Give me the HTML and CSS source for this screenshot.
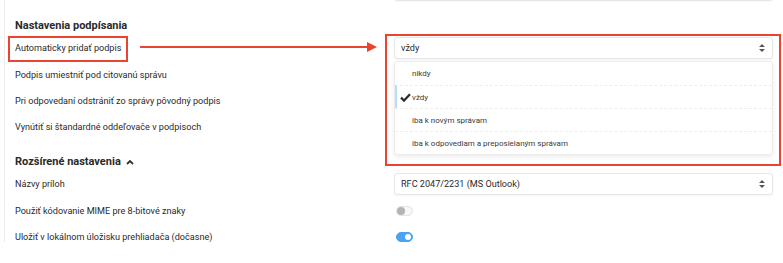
FILE: index.html
```html
<!DOCTYPE html>
<html lang="sk">
<head>
    <meta charset="UTF-8">
    <meta name="viewport" content="width=device-width, initial-scale=1.0">
    <title>Nastavenia podpísania</title>
    <link rel="stylesheet" href="styles.css">
</head>
<body>
    <div class="panel">
        <!-- row from the previous section, scrolled mostly out of view -->
        <div class="row row-prev">
            <div class="label"></div>
            <div class="control"><div class="select"></div></div>
        </div>

        <h3 class="section-title">Nastavenia podpísania</h3>

        <div class="row row-select" id="autoSignature">
            <div class="label">Automaticky pridať podpis</div>
            <div class="control">
                <div class="select">
                    <span>vždy</span>
                    <svg class="sort-icon" width="6" height="8" viewBox="0 0 6 8"><path d="M3 0L6 3H0z M3 8L0 5H6z" fill="#555"/></svg>
                </div>
                <ul class="dropdown">
                    <li>nikdy</li>
                    <li class="selected">
                        <svg class="check" width="11" height="9" viewBox="0 0 11 9"><path d="M1 4.6L4 7.6L10 1.2" fill="none" stroke="#2b2b2b" stroke-width="2.2"/></svg>
                        vždy
                    </li>
                    <li>iba k novým správam</li>
                    <li>iba k odpovediam a preposielaným správam</li>
                </ul>
            </div>
        </div>

        <div class="row row-toggle">
            <div class="label">Podpis umiestniť pod citovanú správu</div>
            <div class="control"></div>
        </div>
        <div class="row row-toggle">
            <div class="label">Pri odpovedaní odstrániť zo správy pôvodný podpis</div>
            <div class="control"></div>
        </div>
        <div class="row row-toggle">
            <div class="label">Vynútiť si štandardné oddeľovače v podpisoch</div>
            <div class="control"></div>
        </div>

        <h3 class="section-title advanced">
            Rozšírené nastavenia
            <svg width="8" height="6" viewBox="0 0 8 6"><path d="M1 5L4 2L7 5" fill="none" stroke="#333" stroke-width="1.8"/></svg>
        </h3>

        <div class="row row-select">
            <div class="label">Názvy príloh</div>
            <div class="control">
                <div class="select">
                    <span>RFC 2047/2231 (MS Outlook)</span>
                    <svg class="sort-icon" width="6" height="8" viewBox="0 0 6 8"><path d="M3 0L6 3H0z M3 8L0 5H6z" fill="#555"/></svg>
                </div>
            </div>
        </div>
        <div class="row row-toggle">
            <div class="label">Použiť kódovanie MIME pre 8-bitové znaky</div>
            <div class="control"><span class="toggle"></span></div>
        </div>
        <div class="row row-toggle">
            <div class="label">Uložiť v lokálnom úložisku prehliadača (dočasne)</div>
            <div class="control"><span class="toggle on"></span></div>
        </div>
    </div>

    <!-- annotation overlay -->
    <div class="mark mark-label"></div>
    <div class="mark-arrow"></div>
    <div class="mark mark-control"></div>
</body>
</html>
```

FILE: styles.css
```css
* {
    margin: 0;
    padding: 0;
    box-sizing: border-box;
}

body {
    font-family: Roboto, 'Liberation Sans', Arial, sans-serif;
    background: white;
    color: #2a2a2a;
    width: 783px;
    height: 263px;
    overflow: hidden;
    position: relative;
}

.panel {
    margin-left: 4px;
    border-left: 1px solid #ececec;
    padding: 0 10px;
    height: 263px;
}

.row {
    display: grid;
    grid-template-columns: 1fr 379px;
    align-items: center;
}

.row-prev {
    height: 22px;
    margin-top: -21px;
}

.row-select {
    height: 28px;
    position: relative;
}

.row-toggle {
    height: 26px;
}

.label {
    font-size: 9.1px;
    color: #2a2a2a;
}

.control {
    position: relative;
    height: 100%;
    display: flex;
    align-items: center;
}

.section-title {
    font-size: 11px;
    font-weight: bold;
    color: #2a2a2a;
    line-height: 16px;
    margin: 17px 0 0;
}

.section-title.advanced {
    margin: 14px 0 0;
    display: flex;
    align-items: center;
    gap: 5px;
}

.select {
    width: 100%;
    height: 22px;
    border: 1px solid #e6e6e6;
    border-radius: 3px;
    box-shadow: 0 1px 2px rgba(0, 0, 0, 0.04);
    display: flex;
    align-items: center;
    justify-content: space-between;
    padding: 0 6px 0 6px;
    font-size: 9.1px;
    color: #2a2a2a;
    background: white;
}

.sort-icon {
    margin-right: 1px;
}

.dropdown {
    list-style: none;
    position: absolute;
    top: 27px;
    left: 0;
    width: 100%;
    background: white;
    border: 1px solid #ececec;
    border-radius: 3px;
    box-shadow: 0 2px 5px rgba(0, 0, 0, 0.08);
    z-index: 2;
}

.dropdown li {
    height: 23px;
    display: flex;
    align-items: center;
    padding-left: 17px;
    font-size: 8px;
    color: #3a3a3a;
    border-top: 1px dashed #eeeeee;
    position: relative;
}

.dropdown li:first-child {
    border-top: none;
}

.dropdown li.selected {
    border-left: 2px solid #b9dcf7;
    padding-left: 15px;
}

.check {
    position: absolute;
    left: 3px;
    top: 7px;
}

.toggle {
    width: 17px;
    height: 10px;
    margin-left: 2px;
    border-radius: 5px;
    border: 1px solid #e3e3e3;
    background: #f7f7f7;
    position: relative;
}

.toggle::after {
    content: '';
    position: absolute;
    left: 0;
    top: 0;
    width: 8px;
    height: 8px;
    border-radius: 50%;
    background: #b4b4b4;
}

.toggle.on {
    background: #4aa3f2;
    border-color: #4aa3f2;
}

.toggle.on::after {
    left: 8px;
    top: 1px;
    width: 6px;
    height: 6px;
    background: white;
}

/* red annotation marks */
.mark {
    position: absolute;
    border: 2px solid #e8442f;
    z-index: 3;
}

.mark-label {
    left: 8px;
    top: 36px;
    width: 120px;
    height: 26px;
}

.mark-control {
    left: 385px;
    top: 34px;
    width: 396px;
    height: 132px;
}

.mark-arrow {
    position: absolute;
    left: 140px;
    top: 46px;
    width: 228px;
    height: 2px;
    background: #e8442f;
    z-index: 3;
}

.mark-arrow::after {
    content: '';
    position: absolute;
    right: -9px;
    top: -4px;
    border-left: 10px solid #e8442f;
    border-top: 5px solid transparent;
    border-bottom: 5px solid transparent;
}
```
